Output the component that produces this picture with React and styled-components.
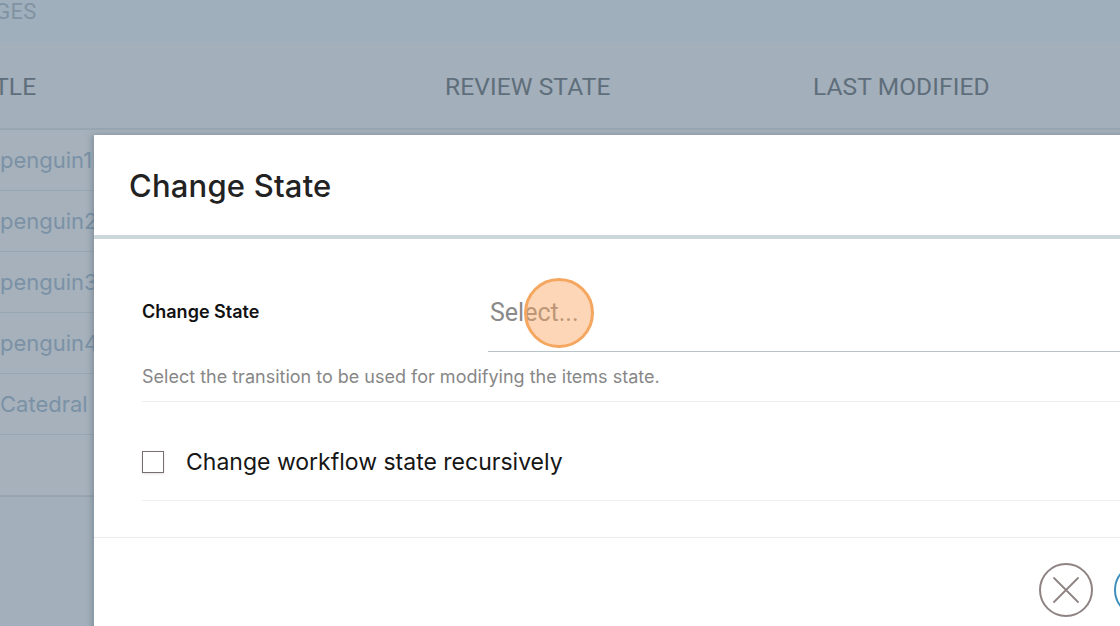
import React from "react";
import styled, { createGlobalStyle } from "styled-components";

const Global = createGlobalStyle`
  html, body { margin: 0; padding: 0; }
  body {
    width: 1120px;
    height: 626px;
    overflow: hidden;
    background: #a3b0bb;
    font-family: Inter, "Noto Sans", sans-serif;
  }
`;

const Page = styled.div`
  position: relative;
  width: 1120px;
  height: 626px;
  overflow: hidden;
  background: #a3b0bb;
`;

const Heading = styled.div`
  height: 43px;
  background: #9fafbc;
  font-family: Roboto, sans-serif;
  font-size: 22px;
  line-height: 24px;
  color: #8193a2;
  margin-left: -32px;
  letter-spacing: 0.3px;
`;

const Card = styled.div`
  background: #a6b1bb;
  border-bottom: 2px solid #97a5b1;
  height: 452px;
`;

const HeadRow = styled.div`
  display: grid;
  grid-template-columns: 445px 368px 1fr;
  align-items: center;
  height: 87px;
  padding-top: 2px;
  box-sizing: border-box;
  background: #a3afba;
  border-bottom: 2px solid #98a6b2;
`;

const HeadCell = styled.div`
  font-family: Roboto, sans-serif;
  font-size: 24.5px;
  color: #5f6e7b;
  letter-spacing: 0.1px;
  margin-left: ${(p) => p.$shift || 0}px;
`;

const Row = styled.div`
  height: 60px;
  border-bottom: 1px solid #97a6b3;
  display: flex;
  align-items: center;
  font-family: Inter, sans-serif;
  font-size: 22px;
  color: #7a91a6;
`;

const Dimmer = styled.div`
  position: absolute;
  inset: 0;
`;

const Modal = styled.div`
  position: absolute;
  left: 94px;
  top: 135px;
  width: 1090px;
  height: 520px;
  background: #ffffff;
  box-shadow: -2px 0 6px rgba(60, 80, 100, 0.35);
  display: flex;
  flex-direction: column;
`;

const Header = styled.div`
  height: 100px;
  display: flex;
  align-items: center;
  padding-left: 35px;
  border-bottom: 4px solid #ccd8db;
  font-size: 31px;
  font-weight: 500;
  color: #222222;
  letter-spacing: 0.2px;
`;

const Content = styled.div`
  padding: 0 0 36px 48px;
  border-bottom: 1px solid #e9ebec;
`;

const Field = styled.div`
  border-bottom: 1px solid #eceeef;
  padding: 35px 0 14px;
`;

const FieldRow = styled.div`
  display: grid;
  grid-template-columns: 346px 1fr;
  align-items: center;
`;

const Label = styled.label`
  font-size: 18px;
  font-weight: 600;
  color: #111;
  margin-top: -4px;
`;

const SelectBox = styled.div`
  position: relative;
  height: 77px;
  display: flex;
  align-items: center;
  padding-left: 2px;
  border-bottom: 1px solid #b7c3c8;
  font-family: Roboto, sans-serif;
  font-size: 25px;
  color: #8a8a8a;
`;

const Click = styled.span`
  position: absolute;
  left: 36px;
  top: 4px;
  width: 64px;
  height: 64px;
  border-radius: 50%;
  background: rgba(251, 163, 96, 0.45);
  border: 3px solid #f5a65f;
`;

const Help = styled.p`
  margin: 15px 0 0;
  font-size: 18px;
  line-height: 20px;
  color: #878787;
`;

const CheckField = styled.div`
  display: flex;
  align-items: center;
  gap: 22px;
  padding: 48px 0 26px;
  border-bottom: 1px solid #eceeef;
`;

const Box = styled.span`
  width: 20px;
  height: 20px;
  border: 1px solid #7a6e6e;
  box-shadow: 0 1px 2px rgba(0, 0, 0, 0.12);
  background: #fff;
`;

const CheckLabel = styled.span`
  font-size: 23px;
  color: #161616;
  line-height: 24px;
`;

const Actions = styled.div`
  display: flex;
  justify-content: flex-end;
  gap: 21px;
  padding: 25px 16px 0 0;
`;

const CircleButton = styled.button`
  width: 54px;
  height: 54px;
  border-radius: 50%;
  border: 2px solid ${(p) => p.$color};
  background: #fff;
  padding: 0;
  display: flex;
  align-items: center;
  justify-content: center;
  color: ${(p) => p.$color};
`;

export default function App() {
  const rows = ["penguin1", "penguin2", "penguin3", "penguin4", "Catedral"];
  return (
    <Page>
      <Global />
      <Heading>PAGES</Heading>
      <Card>
        <HeadRow>
          <HeadCell $shift={-27}>TITLE</HeadCell>
          <HeadCell>REVIEW STATE</HeadCell>
          <HeadCell>LAST MODIFIED</HeadCell>
        </HeadRow>
        {rows.map((r) => (
          <Row key={r}>{r}</Row>
        ))}
      </Card>
      <Dimmer>
        <Modal>
          <Header>Change State</Header>
          <Content>
            <Field>
              <FieldRow>
                <Label>Change State</Label>
                <SelectBox>
                  Select...
                  <Click />
                </SelectBox>
              </FieldRow>
              <Help>Select the transition to be used for modifying the items state.</Help>
            </Field>
            <CheckField>
              <Box />
              <CheckLabel>Change workflow state recursively</CheckLabel>
            </CheckField>
          </Content>
          <Actions>
            <CircleButton $color="#8f8282" aria-label="Cancel">
              <svg width="28" height="28" viewBox="0 0 28 28" fill="none">
                <path d="M2 2 L26 26 M26 2 L2 26" stroke="#8f8282" strokeWidth="1.8" strokeLinecap="round" />
              </svg>
            </CircleButton>
            <CircleButton $color="#3f8fba" aria-label="Ok">
              <svg width="28" height="28" viewBox="0 0 28 28" fill="none">
                <path d="M4 14 L26 14 M18 6 L26 14 L18 22" stroke="#3f8fba" strokeWidth="1.8" />
              </svg>
            </CircleButton>
          </Actions>
        </Modal>
      </Dimmer>
    </Page>
  );
}
